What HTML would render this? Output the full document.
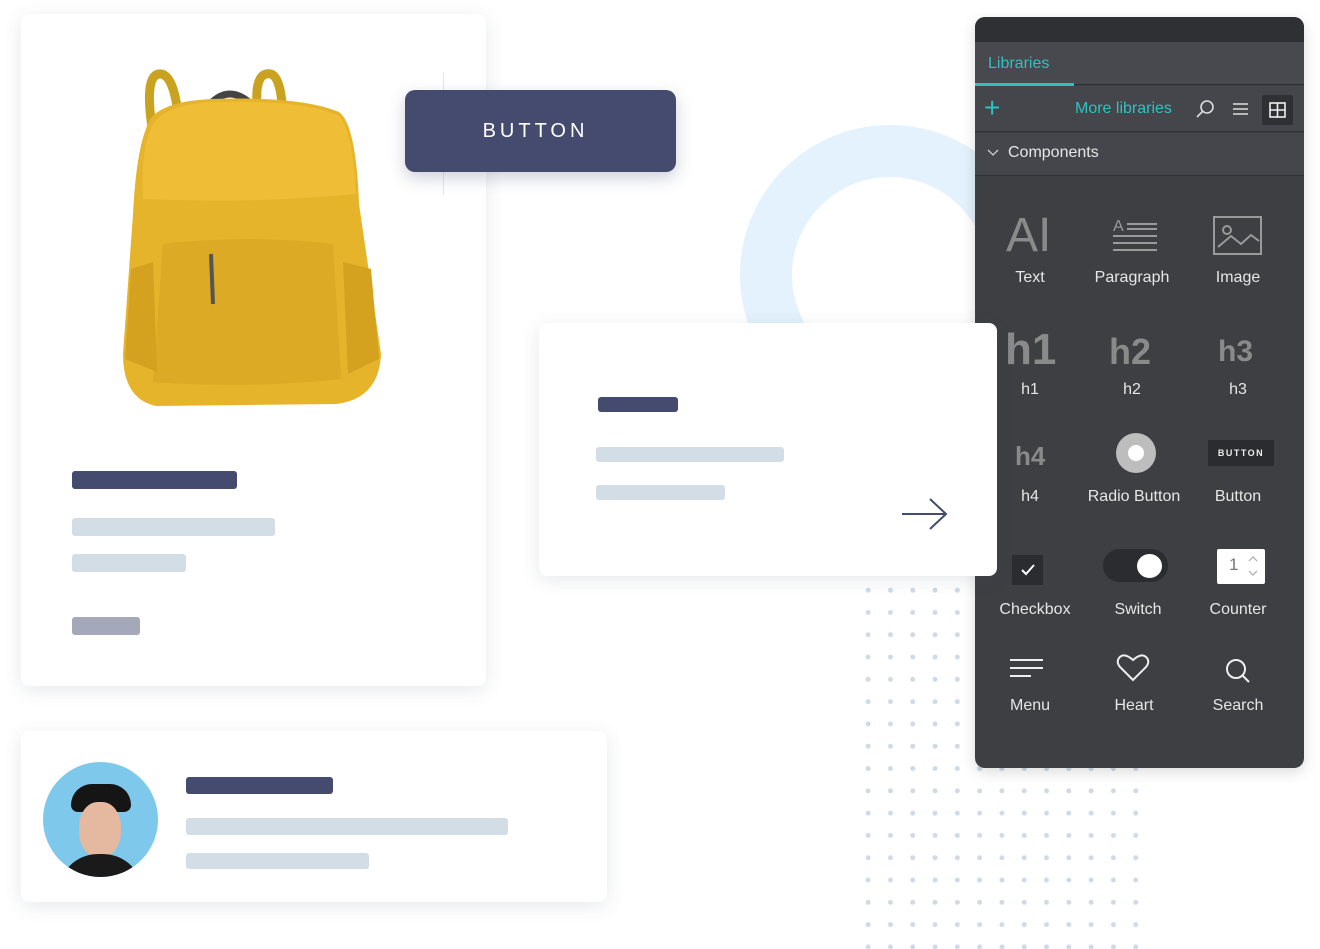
<!DOCTYPE html>
<html><head><meta charset="utf-8"><style>
*{margin:0;padding:0;box-sizing:border-box}
body{width:1320px;height:949px;background:#fff;position:relative;overflow:hidden;font-family:"Liberation Sans",sans-serif}
.abs{position:absolute}
.card{position:absolute;background:#fff;border-radius:8px;box-shadow:0 4px 18px rgba(60,70,90,.12)}
.bar{position:absolute;border-radius:3px}
.d{background:#454b6e}.l{background:#d3dde6}
.panel{left:975px;top:17px;width:329px;height:751px;background:#3e3f43;border-radius:10px;overflow:hidden;box-shadow:0 4px 14px rgba(0,0,0,.15)}
.lab{position:absolute;color:#e6e6e6;font-size:16px;text-align:center;width:110px}
</style></head><body>
<div class="abs" style="left:857px;top:579px;width:292px;height:370px;background-image:radial-gradient(circle,#cfdae6 2.2px,transparent 2.7px);background-size:22.3px 22.3px"></div>
<div class="abs" style="left:740px;top:125px;width:300px;height:300px;border-radius:50%;border:52px solid #e3f2fc"></div>

<div class="card" style="left:21px;top:14px;width:465px;height:672px">
 <svg class="abs" style="left:80px;top:40px" width="290" height="360" viewBox="0 0 290 360">
  <path d="M52 80 Q42 18 60 20 Q74 22 78 70" fill="none" stroke="#c9a21f" stroke-width="9"/>
  <path d="M158 70 Q150 16 170 20 Q182 24 182 75" fill="none" stroke="#c9a21f" stroke-width="9"/>
  <path d="M105 55 Q128 25 155 55" fill="none" stroke="#444" stroke-width="7"/>
  <path d="M45 75 Q50 48 110 45 Q200 42 238 58 Q255 70 258 150 L280 300 Q278 345 235 350 L55 352 Q22 345 22 300 L32 160 Q35 100 45 75 Z" fill="#e6b42a"/>
  <path d="M48 80 Q55 50 115 48 Q205 46 238 62 Q252 78 255 140 Q150 150 42 145 Q40 100 48 80 Z" fill="#efbe36"/>
  <path d="M62 190 Q145 180 232 190 L240 325 Q145 335 52 328 Z" fill="#dcaa24"/>
  <path d="M30 215 L52 208 L56 318 L24 305 Z" fill="#d4a21f"/>
  <path d="M242 208 L270 215 L278 305 L247 320 Z" fill="#d4a21f"/>
  <path d="M110 200 L112 250" stroke="#555" stroke-width="4"/>
 </svg>
 <div class="bar d" style="left:51px;top:457px;width:165px;height:18px"></div>
 <div class="bar l" style="left:51px;top:504px;width:203px;height:18px"></div>
 <div class="bar l" style="left:51px;top:540px;width:114px;height:18px"></div>
 <div class="bar" style="left:51px;top:603px;width:68px;height:18px;background:#a5a8b9"></div>
</div>

<div class="abs" style="left:443px;top:73px;width:1px;height:122px;background:#e6e6e6"></div>
<div class="abs" style="left:405px;top:90px;width:271px;height:82px;background:#454b6e;border-radius:10px;color:#fff;font-size:20px;letter-spacing:4px;text-indent:-10px;text-align:center;line-height:82px;box-shadow:0 6px 16px rgba(60,70,110,.25)">BUTTON</div>

<div class="card" style="left:21px;top:731px;width:586px;height:171px">
 <div class="abs" style="left:22px;top:31px;width:115px;height:115px;border-radius:50%;background:#7ec8ec;overflow:hidden">
  <div class="abs" style="left:28px;top:22px;width:60px;height:28px;border-radius:30px 30px 10px 10px;background:#151515"></div>
  <div class="abs" style="left:36px;top:40px;width:42px;height:55px;border-radius:45%;background:#e5b9a0"></div>
  <div class="abs" style="left:15px;top:92px;width:85px;height:40px;border-radius:40px 40px 0 0;background:#1a1a1a"></div>
 </div>
 <div class="bar d" style="left:165px;top:46px;width:147px;height:17px"></div>
 <div class="bar l" style="left:165px;top:87px;width:322px;height:17px"></div>
 <div class="bar l" style="left:165px;top:122px;width:183px;height:16px"></div>
</div>

<div class="panel abs">
 <div class="abs" style="left:0;top:0;width:329px;height:25px;background:#2f3034"></div>
 <div class="abs" style="left:0;top:25px;width:329px;height:43px;background:#48494e;border-bottom:1px solid #2f3034"></div>
 <div class="abs" style="left:13px;top:38px;color:#2fc1c1;font-size:16px">Libraries</div>
 <div class="abs" style="left:0;top:66px;width:99px;height:3px;background:#2fc1c1"></div>
 <div class="abs" style="left:0;top:69px;width:329px;height:46px;background:#45464b;border-bottom:1px solid #2f3034"></div>
 <div class="abs" style="left:9px;top:76px;color:#2fc1c1;font-size:28px;line-height:30px">+</div>
 <div class="abs" style="left:100px;top:83px;color:#2fc1c1;font-size:16px">More libraries</div>
 <svg class="abs" style="left:220px;top:82px" width="20" height="20"><circle cx="12" cy="8" r="6" fill="none" stroke="#ddd" stroke-width="1.6"/><path d="M8 12 L2 18" stroke="#ddd" stroke-width="1.6"/></svg>
 <svg class="abs" style="left:257px;top:84px" width="18" height="16"><path d="M1 3H16M1 8H16M1 13H16" stroke="#ddd" stroke-width="1.6"/></svg>
 <div class="abs" style="left:287px;top:78px;width:31px;height:30px;background:#2f3034;border-radius:2px"></div>
 <svg class="abs" style="left:294px;top:85px" width="17" height="16"><rect x="1" y="1" width="15" height="14" fill="none" stroke="#eee" stroke-width="1.6"/><path d="M8.5 1V15M1 8H16" stroke="#eee" stroke-width="1.6"/></svg>
 <div class="abs" style="left:0;top:116px;width:329px;height:43px;background:#45464b;border-bottom:1px solid #2f3034"></div>
 <svg class="abs" style="left:12px;top:132px" width="12" height="8"><path d="M1 1L6 6L11 1" fill="none" stroke="#ccc" stroke-width="1.3"/></svg>
 <div class="abs" style="left:33px;top:127px;color:#e6e6e6;font-size:16px">Components</div>

 <div class="abs" style="left:31px;top:195px;color:#8a8a8a;font-size:48px;line-height:48px;font-weight:300">AI</div>
 <svg class="abs" style="left:137px;top:199px" width="46" height="40"><text x="1" y="15" font-size="16" fill="#9a9a9a" font-family="Liberation Sans">A</text><path d="M15 8H45M15 13H45M1 20H45M1 27H45M1 34H45" stroke="#9a9a9a" stroke-width="2"/></svg>
 <svg class="abs" style="left:238px;top:199px" width="50" height="40"><rect x="1" y="1" width="47" height="37" fill="none" stroke="#9a9a9a" stroke-width="2"/><circle cx="14" cy="14" r="4" fill="none" stroke="#9a9a9a" stroke-width="2"/><path d="M5 31 L18 20 L28 28 L38 19 L46 25" fill="none" stroke="#9a9a9a" stroke-width="2"/></svg>
 <div class="lab" style="left:0;top:252px">Text</div>
 <div class="lab" style="left:102px;top:252px">Paragraph</div>
 <div class="lab" style="left:208px;top:252px">Image</div>

 <div class="abs" style="left:30px;top:308px;color:#8a8a8a;font-size:44px;font-weight:bold">h1</div>
 <div class="abs" style="left:134px;top:314px;color:#8a8a8a;font-size:36px;font-weight:bold">h2</div>
 <div class="abs" style="left:243px;top:318px;color:#8a8a8a;font-size:30px;font-weight:bold">h3</div>
 <div class="lab" style="left:0;top:364px">h1</div>
 <div class="lab" style="left:102px;top:364px">h2</div>
 <div class="lab" style="left:208px;top:364px">h3</div>

 <div class="abs" style="left:40px;top:424px;color:#8a8a8a;font-size:26px;font-weight:bold">h4</div>
 <div class="abs" style="left:141px;top:416px;width:40px;height:40px;border-radius:50%;background:#bdbdbd"></div>
 <div class="abs" style="left:153px;top:428px;width:16px;height:16px;border-radius:50%;background:#fff"></div>
 <div class="abs" style="left:233px;top:423px;width:66px;height:26px;background:#2b2c30;color:#eee;font-size:9px;font-weight:bold;letter-spacing:1.5px;text-align:center;line-height:26px">BUTTON</div>
 <div class="lab" style="left:0;top:471px">h4</div>
 <div class="lab" style="left:104px;top:471px">Radio Button</div>
 <div class="lab" style="left:208px;top:471px">Button</div>

 <div class="abs" style="left:37px;top:538px;width:31px;height:30px;background:#2b2c30"></div>
 <svg class="abs" style="left:44px;top:545px" width="18" height="16"><path d="M3 8L7 12L15 3" fill="none" stroke="#fff" stroke-width="2"/></svg>
 <div class="abs" style="left:128px;top:532px;width:65px;height:33px;border-radius:17px;background:#2b2c30"></div>
 <div class="abs" style="left:162px;top:537px;width:25px;height:24px;border-radius:50%;background:#fff"></div>
 <div class="abs" style="left:242px;top:532px;width:48px;height:35px;background:#fff;border-radius:2px;color:#777;font-size:17px;padding:6px 0 0 0"><span style="position:absolute;left:12px;top:6px">1</span><svg class="abs" style="left:30px;top:6px" width="12" height="24"><path d="M2 6L6 2L10 6M2 16L6 20L10 16" fill="none" stroke="#aaa" stroke-width="1.2"/></svg></div>
 <div class="lab" style="left:5px;top:584px">Checkbox</div>
 <div class="lab" style="left:108px;top:584px">Switch</div>
 <div class="lab" style="left:208px;top:584px">Counter</div>

 <svg class="abs" style="left:34px;top:640px" width="36" height="24"><path d="M1 3H34M1 11H34M1 19H22" stroke="#eee" stroke-width="2"/></svg>
 <svg class="abs" style="left:141px;top:636px" width="34" height="30"><path d="M17 27 L4 14 Q0 9 3 5 Q8 -1 17 7 Q26 -1 31 5 Q34 9 30 14 Z" fill="none" stroke="#eee" stroke-width="2"/></svg>
 <svg class="abs" style="left:249px;top:640px" width="28" height="28"><circle cx="12" cy="12" r="9" fill="none" stroke="#eee" stroke-width="2"/><path d="M18.5 18.5L25 25" stroke="#eee" stroke-width="2"/></svg>
 <div class="lab" style="left:0;top:680px">Menu</div>
 <div class="lab" style="left:104px;top:680px">Heart</div>
 <div class="lab" style="left:208px;top:680px">Search</div>
</div>

<div class="card" style="left:539px;top:323px;width:458px;height:253px">
 <div class="bar d" style="left:59px;top:74px;width:80px;height:15px"></div>
 <div class="bar l" style="left:57px;top:124px;width:188px;height:15px"></div>
 <div class="bar l" style="left:57px;top:162px;width:129px;height:15px"></div>
 <svg class="abs" style="left:362px;top:173px" width="48" height="36"><path d="M1 18H44M29 3L45 18L29 33" fill="none" stroke="#454b6e" stroke-width="2"/></svg>
</div>
</body></html>
